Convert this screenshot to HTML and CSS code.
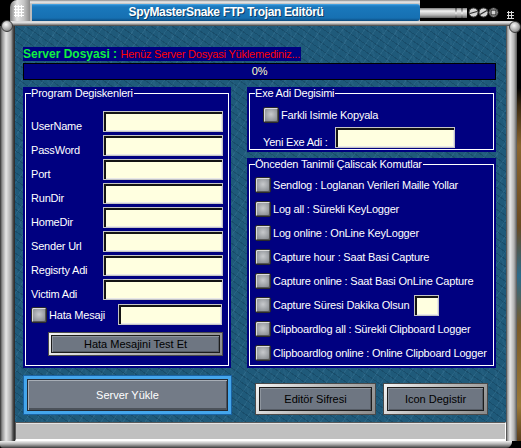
FILE: index.html
```html
<!DOCTYPE html>
<html lang="tr">
<head>
    <meta charset="UTF-8">
    <title>SpyMasterSnake FTP Trojan Editörü</title>
    <link rel="stylesheet" href="styles.css">
</head>
<body>
    <div class="window">
        <div class="top">
            <div class="top-row">
                <div class="corner"><span class="dots"></span></div>
                <div class="caption">
                    <div class="title">SpyMasterSnake FTP Trojan Editörü</div>
                </div>
                <div class="tube"><div class="pipe"><i></i><i></i></div></div>
                <div class="ctl">
                    <svg width="33" height="21" viewBox="0 0 33 21">
                        <g stroke="#3a3a3a" stroke-width="1" fill="#d4d4d4">
                            <circle cx="6.5" cy="12.5" r="4.5"/>
                            <circle cx="16.5" cy="12.5" r="4.5"/>
                            <circle cx="26.5" cy="12.5" r="4.5"/>
                        </g>
                        <g stroke="#2a2a2a" stroke-width="1.2" fill="none">
                            <line x1="3" y1="13.5" x2="10" y2="11.5"/>
                            <line x1="13" y1="14.5" x2="20" y2="10.5"/>
                            <rect x="24" y="10" width="5" height="5"/>
                        </g>
                    </svg>
                </div>
                <div class="grip"><span class="dots"></span></div>
            </div>
            <div class="top-band"></div>
        </div>

        <div class="middle">
            <div class="frame-l"></div>
            <div class="main">
                <div class="client">
                    <div class="file-line">
                        <span class="file-info"><b>Server Dosyasi : </b><span class="warn">Henüz Server Dosyasi Yüklemediniz...</span></span>
                    </div>
                    <div class="progress">0%</div>

                    <div class="cols">
                        <div class="group vars">
                            <fieldset>
                                <legend>Program Degiskenleri</legend>
                                <div class="field"><label>UserName</label><input type="text"></div>
                                <div class="field"><label>PassWord</label><input type="text"></div>
                                <div class="field"><label>Port</label><input type="text"></div>
                                <div class="field"><label>RunDir</label><input type="text"></div>
                                <div class="field"><label>HomeDir</label><input type="text"></div>
                                <div class="field"><label>Sender Url</label><input type="text"></div>
                                <div class="field"><label>Regisrty Adi</label><input type="text"></div>
                                <div class="field"><label>Victim Adi</label><input type="text"></div>
                                <div class="hata">
                                    <span class="check"></span><span>Hata Mesaji</span>
                                    <input type="text" class="hata-input">
                                </div>
                                <button class="btn test"><span>Hata Mesajini Test Et</span></button>
                            </fieldset>
                        </div>

                        <div class="right">
                            <div class="group exe">
                                <fieldset>
                                    <legend>Exe Adi Degisimi</legend>
                                    <div class="opt copy"><span class="check"></span><span>Farkli Isimle Kopyala</span></div>
                                    <div class="field exe-name"><label>Yeni Exe Adi :</label><input type="text"></div>
                                </fieldset>
                            </div>
                            <div class="group cmds">
                                <fieldset>
                                    <legend>Önceden Tanimli Çaliscak Komutlar</legend>
                                    <div class="opt"><span class="check"></span><span>Sendlog : Loglanan Verileri Maille Yollar</span></div>
                                    <div class="opt"><span class="check"></span><span>Log all : Sürekli KeyLogger</span></div>
                                    <div class="opt"><span class="check"></span><span>Log online : OnLine KeyLogger</span></div>
                                    <div class="opt"><span class="check"></span><span>Capture hour : Saat Basi Capture</span></div>
                                    <div class="opt"><span class="check"></span><span>Capture online : Saat Basi OnLine Capture</span></div>
                                    <div class="opt"><span class="check"></span><span>Capture Süresi Dakika Olsun</span><input type="text" class="minutes"></div>
                                    <div class="opt"><span class="check"></span><span>Clipboardlog all : Sürekli Clipboard Logger</span></div>
                                    <div class="opt"><span class="check"></span><span>Clipboardlog online : Online Clipboard Logger</span></div>
                                </fieldset>
                            </div>
                        </div>
                    </div>

                    <div class="actions">
                        <button class="btn load"><span>Server Yükle</span></button>
                        <div class="right-actions">
                            <button class="btn pass"><span>Editör Sifresi</span></button>
                            <button class="btn icon"><span>Icon Degistir</span></button>
                        </div>
                    </div>
                </div>
                <div class="status"></div>
            </div>
            <div class="frame-r"></div>
            <div class="desk"></div>
        </div>

        <div class="bottom"></div>

        <span class="knob knob-l"></span>
        <span class="knob knob-r"></span>
    </div>
</body>
</html>
```

FILE: styles.css
```css
body {
    margin: 0;
    background: #000;
    font-family: "Liberation Sans", Arial, sans-serif;
    font-size: 11px;
    letter-spacing: -0.2px;
}
.window {
    width: 521px;
    height: 448px;
    position: relative;
    overflow: hidden;
    display: flex;
    flex-direction: column;
}

/* ---- window frame ---- */
.top {
    height: 26px;
    flex: none;
    display: flex;
    flex-direction: column;
}
.top-row {
    height: 21px;
    display: flex;
}
.corner {
    width: 20px;
    margin-left: 10px;
    border-radius: 7px 0 0 0;
    background: linear-gradient(to right, #7c7c7c, #e8e8e8 35%, #c4c4c4 70%, #8a8a8a);
    position: relative;
}
.dots {
    position: absolute;
    left: 4px;
    top: 5px;
    width: 10px;
    height: 12px;
    background-image: radial-gradient(circle, #fff 0 1px, transparent 1.2px);
    background-size: 3px 3px;
}
.caption {
    width: 388px;
    padding: 4px 0 0 2px;
    background: linear-gradient(#8a8a8a, #ececec 2px, #bcbcbc 4px);
}
.title {
    height: 17px;
    line-height: 17px;
    text-align: center;
    color: #fff;
    font-weight: bold;
    font-size: 12px;
    letter-spacing: -0.35px;
    text-shadow: 1px 1px 0 #0b3c66;
    border-radius: 0 3px 3px 0;
    background: linear-gradient(#5ab4ee 0, #2a8ad0 1px, #1a78bc 3px, #1670b2 14px, #0c4c80 17px);
}
.tube {
    width: 47px;
    padding-top: 8px;
}
.pipe {
    height: 10px;
    display: flex;
    justify-content: flex-end;
    gap: 4px;
    padding-right: 4px;
    background: linear-gradient(#7a7a7a, #f2f2f2 3px, #b4b4b4 7px, #5c5c5c);
}
.pipe i {
    width: 2px;
    background: linear-gradient(#444, #eee 50%, #444);
}
.ctl {
    width: 33px;
}
.grip {
    flex: 1;
    position: relative;
}
.grip .dots {
    left: 7px;
    top: 11px;
    width: 7px;
    height: 8px;
    background-image: radial-gradient(circle, #d8d8d8 0 1px, transparent 1.2px);
}
.top-band {
    height: 5px;
    width: 507px;
    margin-left: 10px;
    border-radius: 0 6px 0 0;
    background: linear-gradient(#c4c4c4, #f0f0f0 1px, #a8a8a8 3px, #3a3a3a 5px);
}
.knob {
    position: absolute;
    width: 12px;
    height: 12px;
    border-radius: 50%;
    border: 1px solid #3c3c3c;
    box-sizing: border-box;
    background: radial-gradient(circle at 40% 35%, #fafafa, #b8b8b8 45%, #6a6a6a);
}
.knob-l {
    left: 1px;
    top: 20px;
}
.knob-r {
    left: 509px;
    top: 21px;
}

.middle {
    height: 415px;
    display: flex;
}
.frame-l {
    width: 15px;
    background: linear-gradient(to right, #2e2e2e, #8e8e8e 2px, #e6e6e6 6px, #aaaaaa 11px, #4e4e4e 13px, #262626);
}
.frame-r {
    width: 11px;
    background: linear-gradient(to right, #262626, #8a8a8a 1px, #e8e8e8 4px, #b2b2b2 8px, #565656 11px);
}
.desk {
    width: 4px;
    background: linear-gradient(#000 0, #000 62px, #3c2a12 80px, #8a6530 120px, #6a4a22 200px, #2c6a8a 250px, #7a5a2a 300px, #9a7838 380px, #5a3e1c);
}
.bottom {
    height: 7px;
    width: 512px;
    border-radius: 0 0 6px 3px;
    background: linear-gradient(#f0f0f0, #b4b4b4 3px, #7a7a7a 5px, #3a3a3a);
}

/* ---- client area ---- */
.main {
    width: 491px;
    display: flex;
    flex-direction: column;
}
.client {
    height: 396px;
    box-sizing: border-box;
    padding: 21px 10px 0 8px;
    background-color: #1f5a7a;
    background-image:
        repeating-linear-gradient(125deg, rgba(130, 190, 220, 0.10) 0 1px, transparent 1px 9px),
        repeating-linear-gradient(35deg, rgba(0, 25, 45, 0.20) 0 1px, transparent 1px 6px),
        repeating-linear-gradient(80deg, rgba(90, 150, 185, 0.08) 0 2px, transparent 2px 13px);
}
.status {
    height: 19px;
    box-sizing: border-box;
    background: #c0c0c0;
    border-top: 1px solid #5a5a5a;
    border-left: 1px solid #5a5a5a;
    border-bottom: 2px solid #fff;
    border-right: 1px solid #fff;
    box-shadow: inset 0 1px 0 #e4e4e4;
}

.file-line {
    height: 14px;
    line-height: 14px;
}
.file-info {
    display: inline-block;
    background: #000080;
    padding-right: 1px;
}
.file-info b {
    color: #10f040;
    font-size: 12px;
    letter-spacing: 0;
}
.warn {
    color: #ff0000;
}
.progress {
    margin-top: 2px;
    height: 17px;
    box-sizing: border-box;
    border: 1px solid #000;
    background: #000080;
    color: #ffffc8;
    text-align: center;
    line-height: 15px;
}

.cols {
    margin-top: 7px;
    height: 281px;
    display: flex;
    gap: 16px;
}
.group {
    background: #000080;
    padding: 0 2px 2px;
    box-sizing: border-box;
    display: flex;
}
.vars {
    width: 208px;
}
.right {
    width: 249px;
    display: flex;
    flex-direction: column;
    gap: 6px;
}
.exe {
    height: 65px;
}
.cmds {
    height: 210px;
}
fieldset {
    flex: 1;
    min-width: 0;
    margin: 0;
    border: 1px solid #fff;
    color: #fff;
    padding: 12px 6px 0 5px;
}
legend {
    padding: 0 1px 0 0;
    line-height: 12px;
    font-size: 11px;
}
.exe fieldset {
    padding-top: 8px;
}
.cmds fieldset {
    padding-top: 3px;
}

.field {
    display: grid;
    grid-template-columns: 72px 120px;
    height: 21px;
    margin-bottom: 3px;
}
.field label {
    align-self: end;
    line-height: 14px;
    margin-bottom: -1px;
}
input {
    height: 21px;
    box-sizing: border-box;
    margin: 0;
    padding: 0 3px;
    border: 1px solid #c4c4c4;
    background: #ffffe0;
    box-shadow: inset 2px 2px 0 #141414, inset -1px -1px 0 #e8e8e8;
    font: inherit;
}
.hata {
    display: flex;
    align-items: center;
    gap: 2px;
    height: 21px;
    margin-top: 4px;
}
.hata-input {
    width: 104px;
    margin-left: auto;
}
.check {
    width: 16px;
    height: 16px;
    flex: none;
    box-sizing: border-box;
    border: 1px solid #2a2a2a;
    border-radius: 2px;
    background: radial-gradient(circle at 50% 45%, #c8cacd, #8c9095 75%);
    box-shadow: inset 1px 1px 0 #dcdcdc, inset -1px -1px 0 #565656;
}
.opt {
    display: flex;
    align-items: center;
    gap: 2px;
    height: 24px;
}
.copy {
    height: 16px;
    margin-left: 8px;
}
.exe-name {
    margin: 4px 0 0 8px;
}
.minutes {
    width: 25px;
    margin-left: 3px;
}

/* ---- buttons ---- */
.btn {
    display: flex;
    padding: 3px;
    margin: 0;
    box-sizing: border-box;
    border: 1px solid #4a4a4a;
    background: linear-gradient(135deg, #f4f4f4, #b8b8b8 50%, #8a8a8a);
    font: inherit;
    cursor: pointer;
}
.btn span {
    flex: 1;
    display: flex;
    align-items: center;
    justify-content: center;
    border: 1px solid #1c1c1c;
    background: #6e7682;
    box-shadow: inset 1px 1px 0 #8e959e, inset -1px -1px 0 #555b64;
    color: #000;
}
.test {
    width: 175px;
    height: 24px;
    margin: 7px 0 0 17px;
    padding: 2px;
}
.actions {
    margin-top: 7px;
    display: flex;
}
.load {
    width: 209px;
    height: 40px;
    border-color: #1a64a4;
    background: #44a6ec;
}
.load span {
    color: #fff;
    background: #737b87;
    border-color: #222a34;
    box-shadow: inset 1px 1px 0 #a8aeb6, inset -1px -2px 0 #4c525a;
}
.right-actions {
    display: flex;
    gap: 7px;
    margin: 8px 0 0 23px;
}
.pass {
    width: 121px;
    height: 32px;
}
.icon {
    width: 105px;
    height: 32px;
}
```
